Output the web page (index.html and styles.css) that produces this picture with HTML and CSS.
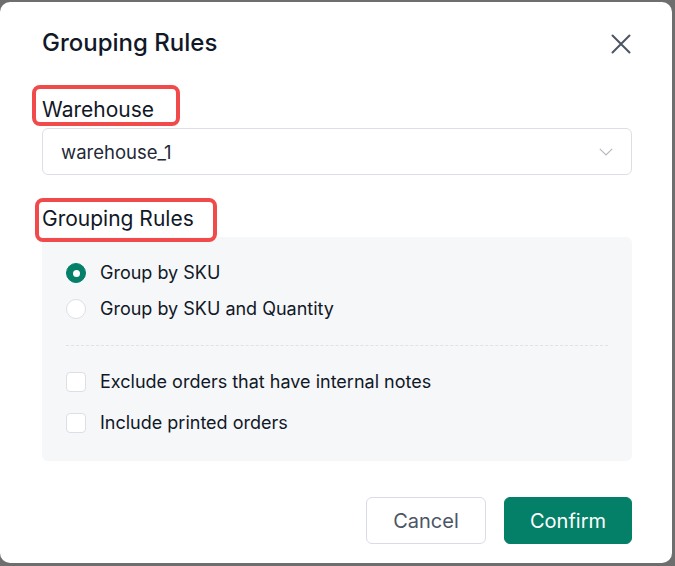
FILE: index.html
```html
<!DOCTYPE html>
<html lang="en">
<head>
<meta charset="utf-8">
<title>Grouping Rules</title>
<link rel="stylesheet" href="styles.css">
</head>
<body>
<div class="dialog">
  <div class="header">
    <h1 class="title">Grouping Rules</h1>
    <button class="close" aria-label="Close">
      <svg width="20" height="20" viewBox="0 0 20 20"><path d="M1.5 1.5 L18.5 18.5 M18.5 1.5 L1.5 18.5" stroke="#4b5563" stroke-width="2" stroke-linecap="round" fill="none"/></svg>
    </button>
  </div>

  <div class="label label-warehouse">Warehouse<span class="mark mark-warehouse"></span></div>
  <div class="select">
    <span class="select-value">warehouse_1</span>
    <svg class="chevron" width="14" height="8" viewBox="0 0 14 8"><polyline points="0.8,0.8 7,7 13.2,0.8" fill="none" stroke="#b4b8bf" stroke-width="1.2"/></svg>
  </div>

  <div class="label label-rules">Grouping Rules<span class="mark mark-rules"></span></div>
  <div class="panel">
    <div class="group radios">
      <label class="option"><span class="radio checked"></span>Group by SKU</label>
      <label class="option"><span class="radio"></span>Group by SKU and Quantity</label>
    </div>
    <div class="divider"></div>
    <div class="group checks">
      <label class="option"><span class="checkbox"></span>Exclude orders that have internal notes</label>
      <label class="option"><span class="checkbox"></span>Include printed orders</label>
    </div>
  </div>

  <div class="footer">
    <button class="btn btn-cancel">Cancel</button>
    <button class="btn btn-confirm">Confirm</button>
  </div>
</div>
</body>
</html>
```

FILE: styles.css
```css
* { box-sizing: border-box; }
html, body { margin: 0; padding: 0; }
body {
  background: #6e6e6e;
  font-family: Inter, "Noto Sans", "Liberation Sans", sans-serif;
  color: #111827;
  width: 675px;
  height: 566px;
  overflow: hidden;
  padding-top: 2px;
}
.dialog {
  width: 672px;
  height: 561px;
  background: #ffffff;
  border-radius: 10px;
  padding: 25px 40px 0 42px;
  display: flex;
  flex-direction: column;
}
.header {
  display: flex;
  justify-content: space-between;
  align-items: center;
  height: 32px;
}
.title {
  margin: 0;
  font-size: 24px;
  line-height: 32px;
  font-weight: 500;
  color: #111827;
}
.close {
  border: 0;
  background: none;
  padding: 0;
  width: 20px;
  height: 20px;
  margin-right: 1px;
  margin-top: 2px;
  display: flex;
}
.label {
  position: relative;
  font-size: 21px;
  line-height: 28px;
  color: #111827;
  align-self: flex-start;
}
.label-warehouse { margin-top: 37px; }
.label-rules { margin-top: 30px; }
.mark {
  position: absolute;
  border: 4px solid #f04a4a;
  border-radius: 8px;
  pointer-events: none;
}
.mark-warehouse { left: -10px; top: -11px; right: -26px; bottom: -2px; }
.mark-rules { left: -7px; top: -7px; right: -23px; bottom: -9px; }
.select {
  margin-top: 4px;
  height: 47px;
  border: 1px solid #dcdfe6;
  border-radius: 6px;
  padding: 0 18px 0 18px;
  display: flex;
  align-items: center;
  justify-content: space-between;
}
.select-value {
  font-size: 18.5px;
  color: #1f2937;
}
.panel {
  margin-top: 4px;
  background: #f6f7f9;
  border-radius: 6px;
  padding: 25px 24px 27px;
}
.group { display: flex; flex-direction: column; }
.radios { gap: 14px; }
.checks { gap: 19px; }
.option {
  display: flex;
  align-items: center;
  gap: 14px;
  height: 22px;
  font-size: 18px;
  line-height: 22px;
  color: #111827;
}
.radio {
  width: 20px;
  height: 20px;
  border-radius: 50%;
  background: #fff;
  border: 1px solid #dcdfe6;
  flex: none;
  position: relative;
}
.radio.checked {
  background: #047f68;
  border-color: #047f68;
}
.radio.checked::after {
  content: "";
  position: absolute;
  left: 50%;
  top: 50%;
  width: 7px;
  height: 7px;
  margin: -3.5px 0 0 -3.5px;
  border-radius: 50%;
  background: #fff;
}
.checkbox {
  width: 20px;
  height: 20px;
  border-radius: 4px;
  background: #fff;
  border: 1px solid #dcdfe6;
  flex: none;
}
.divider {
  margin: 25px 0 25px;
  border-top: 1px dashed #dfe2e7;
}
.footer {
  margin-top: 36px;
  display: flex;
  justify-content: flex-end;
  gap: 18px;
}
.btn {
  height: 47px;
  border-radius: 6px;
  font-family: inherit;
  font-size: 20px;
  padding: 0;
}
.btn-cancel {
  width: 120px;
  background: #fff;
  border: 1px solid #d9dce3;
  color: #4b5563;
}
.btn-confirm {
  width: 128px;
  background: #047f68;
  border: 1px solid #047f68;
  color: #fff;
}
```
